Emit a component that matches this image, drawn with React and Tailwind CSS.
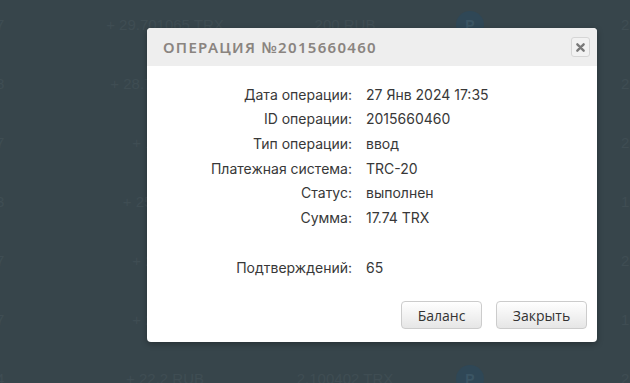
import React from 'react';

const bgRows = [
    { left: '7', amount: '+ 29.701065 TRX', rub: '200 RUB', end: '2' },
    { left: '8', amount: '+ 28.79106 TRX', rub: '200 RUB', end: '2' },
    { left: '7', amount: '+ 17 RUB', rub: '1.2 TRX', end: '2' },
    { left: '3', amount: '+ 25.61 TRX', rub: '175 RUB', end: '1' },
    { left: '7', amount: '+ 20 RUB', rub: '1.4 TRX', end: '2' },
    { left: '7', amount: '+ 20 RUB', rub: '1.4 TRX', end: '1' },
    { left: '4', amount: '+ 22.2 RUB', rub: '2.100402 TRX', end: '2' },
];

const details = [
    ['Дата операции:', '27 Янв 2024 17:35'],
    ['ID операции:', '2015660460'],
    ['Тип операции:', 'ввод'],
    ['Платежная система:', 'TRC-20'],
    ['Статус:', 'выполнен'],
    ['Сумма:', '17.74 TRX'],
];

const Row = ({ label, value }) => (
    <div className="flex h-[24.6px] items-center">
        <div className="w-[205px] text-right">{label}</div>
        <div className="pl-[14px]">{value}</div>
    </div>
);

const App = () => {
    return (
        <div className="relative w-[630px] h-[383px] overflow-hidden bg-[#37454b] font-['Liberation_Sans',sans-serif]">
            {/* table behind the overlay */}
            <div className="flex flex-col pt-[13px] gap-[35px] text-[15px] text-[#3f4d53]">
                {bgRows.map((r, i) => (
                    <div key={i} className="flex items-center h-[24px]">
                        <div className="w-[100px] -ml-[4px]">{r.left}</div>
                        <div className="w-[138px] text-center">{r.amount}</div>
                        <div className="w-[222px] text-center">{r.rub}</div>
                        <div className="w-[28px] h-[28px] rounded-full bg-[#2f4756] flex items-center justify-center text-[#3b5564] font-bold text-sm">P</div>
                        <div className="ml-[137px]">{r.end}</div>
                    </div>
                ))}
            </div>

            {/* modal */}
            <div className="absolute left-[147px] top-[28px] w-[450px] h-[314px] bg-white rounded-[4px] shadow-[0_2px_6px_rgba(0,0,0,0.3)] overflow-hidden">
                <div className="h-[38px] bg-[#eeeeee] flex items-center justify-between pl-[16px] pr-[7px]">
                    <div className="font-['Noto_Sans',sans-serif] font-semibold text-[15px] tracking-[1.3px] text-[#8a8480] pt-[1px]">
                        ОПЕРАЦИЯ №2015660460
                    </div>
                    <button className="w-[19px] h-[20px] rounded-[3px] border border-[#d6d6d6] bg-[#f2f2f2] flex items-center justify-center">
                        <svg width="9" height="9" viewBox="0 0 10 10">
                            <path d="M1.5 1.5 L8.5 8.5 M8.5 1.5 L1.5 8.5" stroke="#7a7a7a" strokeWidth="2.6" strokeLinecap="round" />
                        </svg>
                    </button>
                </div>

                <div className="pt-[16px] text-[14px] text-[#383838] font-['Inter',sans-serif]">
                    {details.map(([l, v]) => (
                        <Row key={l} label={l} value={v} />
                    ))}
                    <div className="h-[26px]" />
                    <Row label="Подтверждений:" value="65" />
                </div>

                <div className="flex justify-end gap-[14px] pr-[10px] pt-[21px] font-['Open_Sans',sans-serif] text-[14px] text-[#333]">
                    <button className="w-[81px] h-[28px] rounded-[4px] border border-[#cccccc] bg-gradient-to-b from-white to-[#e6e6e6]">
                        Баланс
                    </button>
                    <button className="w-[91px] h-[28px] rounded-[4px] border border-[#cccccc] bg-gradient-to-b from-white to-[#e6e6e6]">
                        Закрыть
                    </button>
                </div>
            </div>
        </div>
    );
};

export default App;
